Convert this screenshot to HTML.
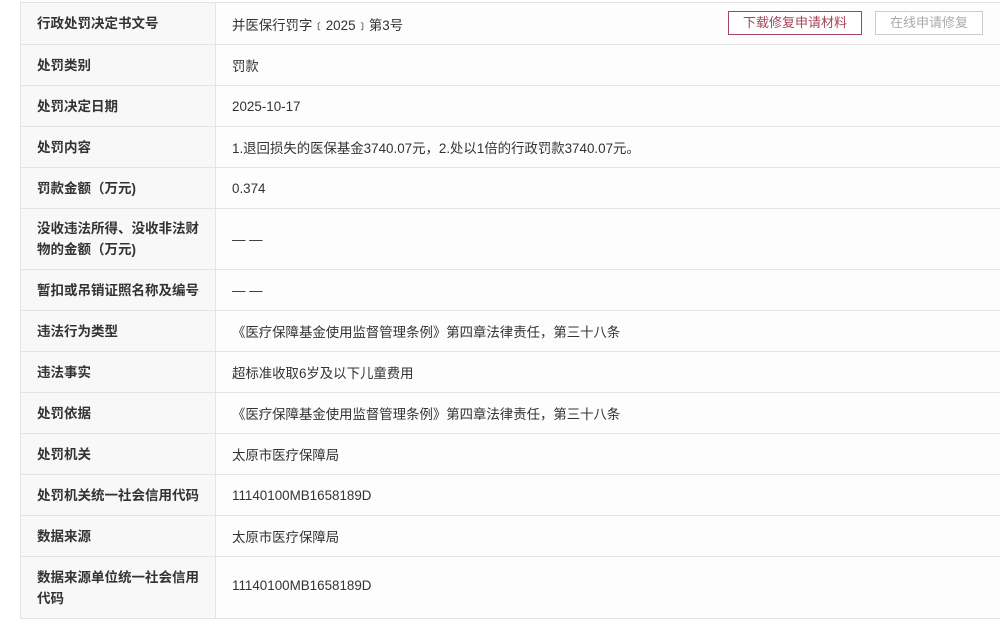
<!DOCTYPE html>
<html><head><meta charset="utf-8"><style>
body{margin:0;background:#fff;width:1000px;height:628px;overflow:hidden;font-family:"Liberation Sans","Noto Sans CJK SC",sans-serif;}
table{position:absolute;left:20px;top:2px;width:990px;border-collapse:collapse;}
td{border:1px solid #e4e4e4;height:40px;padding:0 16px;font-size:13.4px;color:#333;}
td.l{width:162px;background:#f8f8f8;font-weight:bold;font-size:13.5px;line-height:21px;}
td.v{background:#fdfdfd;}
.b1{position:absolute;left:728px;top:11px;width:132px;height:22px;border:1px solid #a5445a;color:#a5445a;font-size:13px;text-align:center;line-height:22px;background:#fff;}
.b2{position:absolute;left:875px;top:11px;width:106px;height:22px;border:1px solid #ccc;color:#aaa;font-size:13px;text-align:center;line-height:22px;background:#fff;}
</style></head><body>
<table>
<tr><td class="l" style="height:41px">行政处罚决定书文号</td><td class="v">并医保行罚字﹝2025﹞第3号</td></tr>
<tr><td class="l">处罚类别</td><td class="v">罚款</td></tr>
<tr><td class="l">处罚决定日期</td><td class="v">2025-10-17</td></tr>
<tr><td class="l">处罚内容</td><td class="v">1.退回损失的医保基金3740.07元，2.处以1倍的行政罚款3740.07元。</td></tr>
<tr><td class="l">罚款金额（万元)</td><td class="v">0.374</td></tr>
<tr><td class="l" style="height:60px">没收违法所得、没收非法财物的金额（万元)</td><td class="v">— —</td></tr>
<tr><td class="l">暂扣或吊销证照名称及编号</td><td class="v">— —</td></tr>
<tr><td class="l">违法行为类型</td><td class="v">《医疗保障基金使用监督管理条例》第四章法律责任，第三十八条</td></tr>
<tr><td class="l">违法事实</td><td class="v">超标准收取6岁及以下儿童费用</td></tr>
<tr><td class="l">处罚依据</td><td class="v">《医疗保障基金使用监督管理条例》第四章法律责任，第三十八条</td></tr>
<tr><td class="l">处罚机关</td><td class="v">太原市医疗保障局</td></tr>
<tr><td class="l">处罚机关统一社会信用代码</td><td class="v">11140100MB1658189D</td></tr>
<tr><td class="l">数据来源</td><td class="v">太原市医疗保障局</td></tr>
<tr><td class="l" style="height:61px">数据来源单位统一社会信用代码</td><td class="v" style="vertical-align:top;padding-top:21px">11140100MB1658189D</td></tr>
</table>
<div class="b1">下载修复申请材料</div>
<div class="b2">在线申请修复</div>
</body></html>
